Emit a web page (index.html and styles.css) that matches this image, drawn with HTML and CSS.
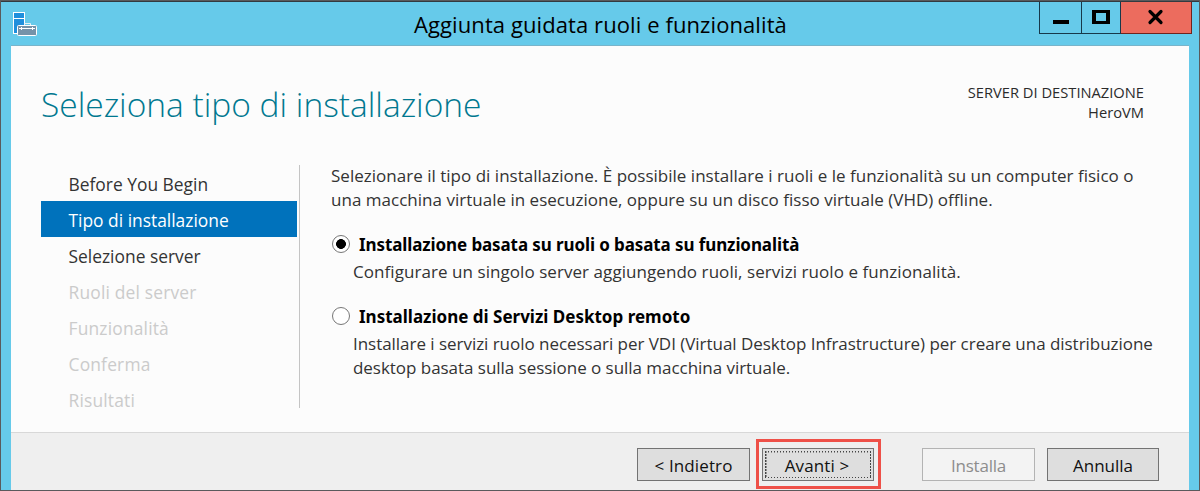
FILE: index.html
```
<!DOCTYPE html>
<html lang="it">
<head>
<meta charset="utf-8">
<title>Aggiunta guidata ruoli e funzionalità</title>
<link rel="stylesheet" href="styles.css">
</head>
<body>
<div class="window">
  <header class="titlebar">
    <svg class="app-icon" width="26" height="26" viewBox="0 0 26 26">
      <rect x="1.5" y="1.5" width="11" height="21" fill="#1f8fdc" stroke="#fff"/>
      <path d="M2 7.500h10" stroke="#fff"/>
      <path d="M12.500 14v-1.500h6v1.500" fill="none" stroke="#e4f0f6"/>
      <rect x="5.500" y="14.500" width="19" height="10" rx="1" fill="#7593a9" stroke="#fff"/>
      <path d="M7 17.500h16M9.500 16v3M20.500 16v3" stroke="#fff"/>
    </svg>
    <h1 class="title">Aggiunta guidata ruoli e funzionalità</h1>
    <div class="controls">
      <span class="control minimize"><svg width="42" height="31"><path d="M13 18h16v4H13z"/></svg></span>
      <span class="control maximize"><svg width="38" height="31"><path fill-rule="evenodd" d="M10 8h18v14H10zM14 11v8h10v-8z"/></svg></span>
      <span class="control close"><svg width="70" height="31"><path d="M29 9.500l11 11M40 9.500l-11 11" stroke="#000" stroke-width="3.200" stroke-linecap="round"/></svg></span>
    </div>
  </header>
  <main class="content">
    <div class="heading-row">
      <h2 class="heading">Seleziona tipo di installazione</h2>
      <div class="destination"><div class="dest-label">SERVER DI DESTINAZIONE</div><div class="dest-name">HeroVM</div></div>
    </div>
    <div class="wizard">
      <nav class="steps">
        <div class="step">Before You Begin</div>
        <div class="step selected">Tipo di installazione</div>
        <div class="step">Selezione server</div>
        <div class="step disabled">Ruoli del server</div>
        <div class="step disabled">Funzionalità</div>
        <div class="step disabled">Conferma</div>
        <div class="step disabled">Risultati</div>
      </nav>
      <section class="page">
        <p class="intro">Selezionare il tipo di installazione. È possibile installare i ruoli e le funzionalità su un computer fisico o<br>una macchina virtuale in esecuzione, oppure su un disco fisso virtuale (VHD) offline.</p>
        <div class="option">
          <span class="radio checked"></span>
          <div><div class="option-title tight">Installazione basata su ruoli o basata su funzionalità</div>
          <p class="option-text wide">Configurare un singolo server aggiungendo ruoli, servizi ruolo e funzionalità.</p></div>
        </div>
        <div class="option">
          <span class="radio"></span>
          <div><div class="option-title">Installazione di Servizi Desktop remoto</div>
          <p class="option-text">Installare i servizi ruolo necessari per VDI (Virtual Desktop Infrastructure) per creare una distribuzione<br>desktop basata sulla sessione o sulla macchina virtuale.</p></div>
        </div>
      </section>
    </div>
  </main>
  <footer class="footer">
    <div class="button">&lt; Indietro</div>
    <div class="highlight"><div class="button next"><span class="focus-ring">Avanti &gt;</span></div></div>
    <div class="button inactive">Installa</div>
    <div class="button cancel">Annulla</div>
  </footer>
</div>
</body>
</html>
```
FILE: styles.css
```
* { box-sizing: border-box; }
body { margin: 0; font: 17px/24px "Open Sans", "Noto Sans", sans-serif; color: #333; }
h1, h2, p { margin: 0; font-weight: 400; white-space: nowrap; }
.window {
  width: 1200px; height: 491px; display: flex; flex-direction: column;
  background: #66caea; border: 1px solid #5a5a5c; overflow: hidden;
}
.titlebar {
  height: 44px; display: flex; align-items: flex-start;
  border-top: 1px solid #333a40; flex: none;
}
.app-icon { margin: 9px 0 0 11px; flex: none; }
.title {
  margin-left: 376px; padding-top: 6px; width: 625px;
  font-size: 22px; line-height: 32px; letter-spacing: .09px; color: #000;
}
.controls { display: flex; height: 32px; border: 1px solid #17384a; border-top: 0; }
.control { display: flex; height: 31px; border-right: 1px solid #17384a; }
.control svg { display: block; }
.minimize { width: 42px; }
.maximize { width: 39px; }
.maximize, .minimize { overflow: hidden; }
.close { width: 71px; height: 32px; margin-right: -1px; background: #ec6c5e; border-right-color: #71231d; border-bottom: 1px solid #71231d; }
.content {
  margin: 0 10px; height: 387px; background: #fcfcfc;
  border-top: 1px solid #79b4ca; flex: none;
}
.heading-row { display: flex; justify-content: space-between; height: 119px; padding: 34px 45px 0 30px; }
.heading { font-size: 33.500px; font-weight: 300; line-height: 48px; color: #007890; }
.destination { text-align: right; font-size: 14.700px; line-height: 20px; padding-top: 2px; color: #2b2b2b; }
.wizard { display: flex; padding-left: 30px; }
.steps { width: 259px; height: 243px; border-right: 1px solid #c4c4c4; }
.step { width: 256px; height: 36px; padding: 2px 0 0 27.500px; line-height: 35px; font-size: 17.400px; }
.selected { background: #0072bc; color: #fff; }
.disabled { color: #cbcbcb; letter-spacing: .18px; }
.page { padding-left: 31px; }
.intro { margin-top: -1px; letter-spacing: .015px; }
.option { display: flex; margin-top: 21px; }
.radio {
  flex: none; width: 18px; height: 18px; margin: 2px 0 0 1px;
  border: 1px solid #777; border-radius: 50%; background: #fff;
}
.checked { background: radial-gradient(circle, #000 4.600px, #fff 5.200px); }
.option-title { padding-left: 9px; font: bold 17px/24px "Noto Sans", sans-serif; color: #000; }
.tight { letter-spacing: -.1px; }
.option-text { padding: 3px 0 0 3px; letter-spacing: -.037px; }
.wide { letter-spacing: .06px; }
.footer {
  margin: 0 10px; height: 58px; display: flex; align-items: flex-start;
  background: #efefef; border-top: 1px solid #d8d8d8; padding: 6px 0 0 626px;
}
.button {
  width: 113px; height: 33px; margin-top: 9px; border: 1px solid #737373;
  background: #dedede; color: #111; text-align: center; line-height: 33px; letter-spacing: .12px;
}
.highlight { width: 125px; height: 50px; margin-left: 6px; border: 3px solid #ee5048; padding: 0 3px; }
.next { width: 112px; margin-top: 6px; padding: 2px; }
.focus-ring { display: block; height: 27px; border: 1.500px dotted #222; border: 1px dashed #222; line-height: 27px; }
.focus-ring {
  border: 0; padding-right: 2px; line-height: 29px;
  background:
    repeating-linear-gradient(90deg, #444 0 1.500px, transparent 1.500px 3px) top / 100% 1.500px no-repeat,
    repeating-linear-gradient(90deg, #444 0 1.500px, transparent 1.500px 3px) bottom / 100% 1.500px no-repeat,
    repeating-linear-gradient(#444 0 1.500px, transparent 1.500px 3px) left / 1.500px 100% no-repeat,
    repeating-linear-gradient(#444 0 1.500px, transparent 1.500px 3px) right / 1.500px 100% no-repeat;
}
.inactive { margin-left: 41px; border-color: #b3b3b3; background: #f3f3f3; color: #8d8d8d; letter-spacing: -.2px; }
.cancel { width: 112px; margin-left: 12px; letter-spacing: 0; }
```
